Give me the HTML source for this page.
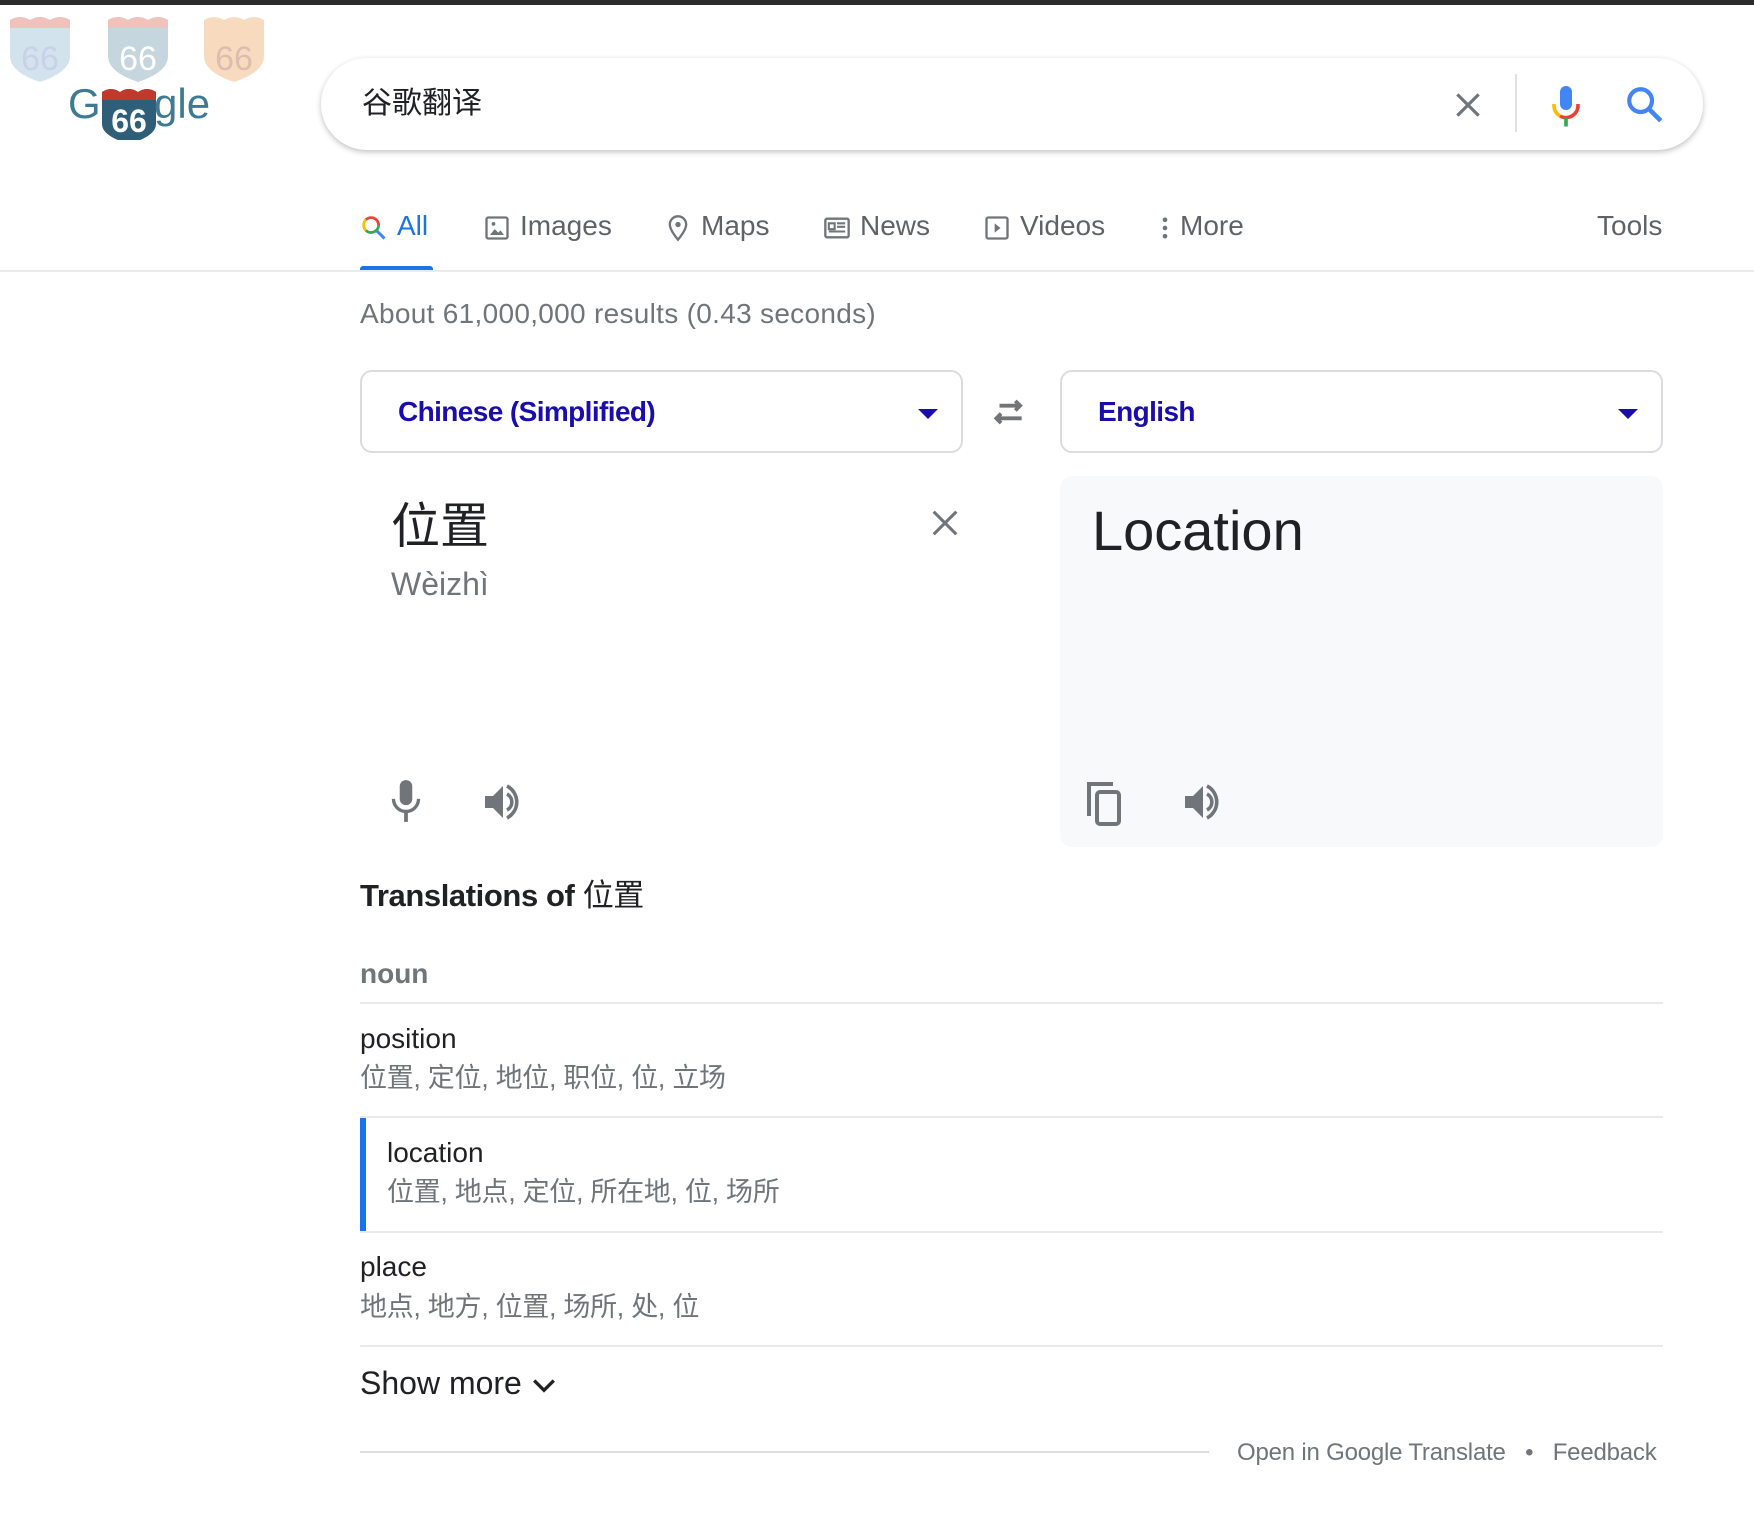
<!DOCTYPE html>
<html><head><meta charset="utf-8"><style>
*{margin:0;padding:0;box-sizing:border-box}
body{width:1754px;height:1540px;background:#fff;position:relative;overflow:hidden;font-family:"Liberation Sans","Noto Sans CJK SC",sans-serif;color:#202124}
.a{position:absolute;white-space:nowrap}
.tab{position:absolute;top:206px;height:40px;line-height:40px;font-size:28px;color:#5f6368}
.tab svg{vertical-align:middle;margin-right:9px}
.hr{position:absolute;left:360px;width:1303px;height:2px;background:#e8eaed}
.w{font-size:28px;line-height:34px}
.g{font-size:27px;line-height:34px;color:#70757a;letter-spacing:-0.3px}
</style></head><body>
<div class="a" style="left:0;top:0;width:1754px;height:5px;background:#2b2b2b"></div>

<svg class="a" style="left:4px;top:10px" width="270" height="130" viewBox="0 0 270 130">
 <g opacity="0.45">
  <path d="M6 10 q10-6 20 0 q10-6 20 0 q10-6 20 0 v36 q0 16-30 26 q-30-10-30-26z" fill="#9cc3d9"/>
  <path d="M6 10 q10-6 20 0 q10-6 20 0 q10-6 20 0 v8 h-60z" fill="#e07a6a"/>
  <text x="36" y="60" font-size="34" text-anchor="middle" fill="#8a9ad0" font-family="Liberation Sans">66</text>
  <path d="M104 10 q10-6 20 0 q10-6 20 0 q10-6 20 0 v36 q0 16-30 26 q-30-10-30-26z" fill="#7fa6b8"/>
  <path d="M104 10 q10-6 20 0 q10-6 20 0 q10-6 20 0 v8 h-60z" fill="#e07a6a"/>
  <text x="134" y="60" font-size="34" text-anchor="middle" fill="#fff" font-family="Liberation Sans">66</text>
  <path d="M200 10 q10-6 20 0 q10-6 20 0 q10-6 20 0 v36 q0 16-30 26 q-30-10-30-26z" fill="#f0b070"/>
  <text x="230" y="60" font-size="34" text-anchor="middle" fill="#b07050" font-family="Liberation Sans">66</text>
 </g>
 <text x="64" y="108" font-size="42" fill="#3d7a93" font-family="Liberation Sans">G</text>
 <path d="M98 82 q9-6 18 0 q9-6 18 0 q9-6 18 0 v32 q0 12-27 20 q-27-8-27-20z" fill="#2f5f78"/>
 <path d="M98 82 q9-6 18 0 q9-6 18 0 q9-6 18 0 v8 h-54z" fill="#c0392b"/>
 <text x="125" y="122" font-size="32" text-anchor="middle" fill="#fff" font-weight="bold" font-family="Liberation Sans">66</text>
 <text x="150" y="108" font-size="42" fill="#3d7a93" font-family="Liberation Sans">gle</text>
</svg>

<div class="a" style="left:321px;top:58px;width:1382px;height:92px;border-radius:46px;background:#fff;box-shadow:0 2px 6px rgba(32,33,36,.28)"></div>
<div class="a" style="left:362px;top:83px;font-size:30px;line-height:42px;color:#202124">谷歌翻译</div>
<svg class="a" style="left:1452px;top:89px" width="32" height="32" viewBox="0 0 24 24"><path d="M4 4L20 20M20 4L4 20" stroke="#70757a" stroke-width="2.4"/></svg>
<div class="a" style="left:1515px;top:74px;width:2px;height:58px;background:#dfe1e5"></div>
<svg class="a" style="left:1548px;top:84px" width="36" height="46" viewBox="0 0 24 30">
 <rect x="8" y="1" width="8" height="16" rx="4" fill="#4285f4"/>
 <path d="M4 13v1a8 8 0 0 0 4 7" stroke="#fbbc05" stroke-width="2.4" fill="none"/>
 <path d="M8 21a8 8 0 0 0 12-7v-1" stroke="#ea4335" stroke-width="2.4" fill="none"/>
 <path d="M12 22v6" stroke="#34a853" stroke-width="2.4"/>
</svg>
<svg class="a" style="left:1624px;top:84px" width="42" height="42" viewBox="0 0 24 24"><circle cx="9.5" cy="9.5" r="6.5" stroke="#4285f4" stroke-width="2.4" fill="none"/><path d="M14.5 14.5L21 21" stroke="#4285f4" stroke-width="2.6"/></svg>

<div class="tab" style="left:360px;color:#1a73e8"><svg width="28" height="28" viewBox="0 0 24 24"><path d="M16 9.5a6.5 6.5 0 0 0-11-4.6" stroke="#ea4335" stroke-width="2.4" fill="none"/><path d="M5 4.9A6.5 6.5 0 0 0 5 14" stroke="#fbbc05" stroke-width="2.4" fill="none"/><path d="M5 14a6.5 6.5 0 0 0 11-4.5" stroke="#34a853" stroke-width="2.4" fill="none"/><path d="M14.5 14.5L21 21" stroke="#4285f4" stroke-width="2.6"/></svg>All</div>
<div class="a" style="left:360px;top:266px;width:73px;height:5px;background:#1a73e8;border-radius:3px 3px 0 0"></div>
<div class="tab" style="left:483px"><svg width="28" height="28" viewBox="0 0 24 24"><rect x="3" y="3" width="18" height="18" rx="1.5" stroke="#70757a" stroke-width="2" fill="none"/><path d="M6 18l4-5 3 3 2-2 3 4z" fill="#70757a"/><circle cx="9" cy="8.5" r="1.6" fill="#70757a"/></svg>Images</div>
<div class="tab" style="left:664px"><svg width="28" height="28" viewBox="0 0 24 24"><path d="M12 2a7 7 0 0 0-7 7c0 5 7 13 7 13s7-8 7-13a7 7 0 0 0-7-7z" stroke="#70757a" stroke-width="2" fill="none"/><circle cx="12" cy="9" r="2.3" fill="#70757a"/></svg>Maps</div>
<div class="tab" style="left:823px"><svg width="28" height="28" viewBox="0 0 24 24"><rect x="2" y="4" width="20" height="16" rx="1.5" stroke="#70757a" stroke-width="2" fill="none"/><path d="M5 8h5v5H5zM12 8h7M12 11h7M5 15h14" stroke="#70757a" stroke-width="1.8" fill="none"/></svg>News</div>
<div class="tab" style="left:983px"><svg width="28" height="28" viewBox="0 0 24 24"><rect x="3" y="3" width="18" height="18" rx="1.5" stroke="#70757a" stroke-width="2" fill="none"/><path d="M10 8l5 4-5 4z" fill="#70757a"/></svg>Videos</div>
<div class="tab" style="left:1159px"><svg width="12" height="28" viewBox="0 0 6 24"><circle cx="3" cy="5" r="2" fill="#70757a"/><circle cx="3" cy="12" r="2" fill="#70757a"/><circle cx="3" cy="19" r="2" fill="#70757a"/></svg>More</div>
<div class="tab" style="left:1597px">Tools</div>
<div class="a" style="left:0;top:270px;width:1754px;height:2px;background:#ebebeb"></div>

<div class="a" style="left:360px;top:297px;font-size:28px;line-height:34px;color:#70757a;letter-spacing:0.3px">About 61,000,000 results (0.43 seconds)</div>

<div class="a" style="left:360px;top:370px;width:603px;height:83px;border:2px solid #dadce0;border-radius:12px"></div>
<div class="a" style="left:398px;top:394px;font-size:28px;line-height:36px;font-weight:bold;color:#1a0dab;letter-spacing:-0.6px">Chinese (Simplified)</div>
<div class="a" style="left:918px;top:409px;width:0;height:0;border-left:10px solid transparent;border-right:10px solid transparent;border-top:10px solid #1a0dab"></div>
<svg class="a" style="left:990px;top:396px" width="38" height="32" viewBox="0 0 24 20"><path d="M5 14h15M7 11l-3 3 3 3" stroke="#70757a" stroke-width="2.4" fill="none"/><path d="M19 6H6M16 3l3 3-3 3" stroke="#70757a" stroke-width="2.4" fill="none"/></svg>
<div class="a" style="left:1060px;top:370px;width:603px;height:83px;border:2px solid #dadce0;border-radius:12px"></div>
<div class="a" style="left:1098px;top:394px;font-size:28px;line-height:36px;font-weight:bold;color:#1a0dab;letter-spacing:-0.6px">English</div>
<div class="a" style="left:1618px;top:409px;width:0;height:0;border-left:10px solid transparent;border-right:10px solid transparent;border-top:10px solid #1a0dab"></div>

<div class="a" style="left:391px;top:497px;font-size:49px;line-height:60px;color:#202124">位置</div>
<div class="a" style="left:391px;top:564px;font-size:32px;line-height:40px;color:#70757a">Wèizhì</div>
<svg class="a" style="left:928px;top:506px" width="34" height="34" viewBox="0 0 24 24"><path d="M4 4L20 20M20 4L4 20" stroke="#70757a" stroke-width="2.2"/></svg>
<svg class="a" style="left:388px;top:778px" width="36" height="46" viewBox="0 0 16 22"><rect x="5" y="1" width="6" height="12" rx="3" fill="#70757a"/><path d="M2 10a6 6 0 0 0 12 0" stroke="#70757a" stroke-width="1.6" fill="none"/><path d="M8 16v5" stroke="#70757a" stroke-width="1.8"/></svg>
<svg class="a" style="left:482px;top:780px" width="42" height="44" viewBox="0 0 20 22"><path d="M1 8h4l5-5v16l-5-5H1z" fill="#70757a"/><path d="M12 7a4.5 4.5 0 0 1 0 8" stroke="#70757a" stroke-width="1.8" fill="none"/><path d="M12 3a9 9 0 0 1 0 16" stroke="#70757a" stroke-width="1.8" fill="none"/></svg>

<div class="a" style="left:1060px;top:476px;width:603px;height:371px;background:#f8f9fa;border-radius:12px"></div>
<div class="a" style="left:1092px;top:498px;font-size:56px;line-height:66px;color:#202124">Location</div>
<svg class="a" style="left:1085px;top:780px" width="40" height="46" viewBox="0 0 20 23"><path d="M2 18V2h12" stroke="#70757a" stroke-width="2" fill="none"/><rect x="6" y="6" width="11" height="16" rx="1.5" stroke="#70757a" stroke-width="2" fill="none"/></svg>
<svg class="a" style="left:1182px;top:780px" width="42" height="44" viewBox="0 0 20 22"><path d="M1 8h4l5-5v16l-5-5H1z" fill="#70757a"/><path d="M12 7a4.5 4.5 0 0 1 0 8" stroke="#70757a" stroke-width="1.8" fill="none"/><path d="M12 3a9 9 0 0 1 0 16" stroke="#70757a" stroke-width="1.8" fill="none"/></svg>

<div class="a" style="left:360px;top:877px;font-size:31px;line-height:38px;font-weight:bold;letter-spacing:-0.4px">Translations of <span style="font-weight:normal">位置</span></div>
<div class="a" style="left:360px;top:957px;font-size:28px;line-height:34px;font-weight:bold;color:#70757a">noun</div>
<div class="hr" style="top:1002px"></div>
<div class="a w" style="left:360px;top:1022px">position</div>
<div class="a g" style="left:360px;top:1061px">位置, 定位, 地位, 职位, 位, 立场</div>
<div class="hr" style="top:1116px"></div>
<div class="a" style="left:360px;top:1118px;width:6px;height:113px;background:#1a73e8"></div>
<div class="a w" style="left:387px;top:1136px">location</div>
<div class="a g" style="left:387px;top:1175px">位置, 地点, 定位, 所在地, 位, 场所</div>
<div class="hr" style="top:1231px"></div>
<div class="a w" style="left:360px;top:1250px">place</div>
<div class="a g" style="left:360px;top:1290px">地点, 地方, 位置, 场所, 处, 位</div>
<div class="hr" style="top:1345px"></div>
<div class="a" style="left:360px;top:1364px;font-size:32px;line-height:38px;color:#202124">Show more <svg width="26" height="20" viewBox="0 0 24 16" style="vertical-align:middle"><path d="M3 3l9 9 9-9" stroke="#202124" stroke-width="3" fill="none"/></svg></div>

<div class="a" style="left:360px;top:1451px;width:849px;height:2px;background:#dadce0"></div>
<div class="a" style="left:1237px;top:1438px;font-size:24px;line-height:30px;color:#70757a;letter-spacing:-0.2px">Open in Google Translate &nbsp;&nbsp;•&nbsp;&nbsp; Feedback</div>
</body></html>
